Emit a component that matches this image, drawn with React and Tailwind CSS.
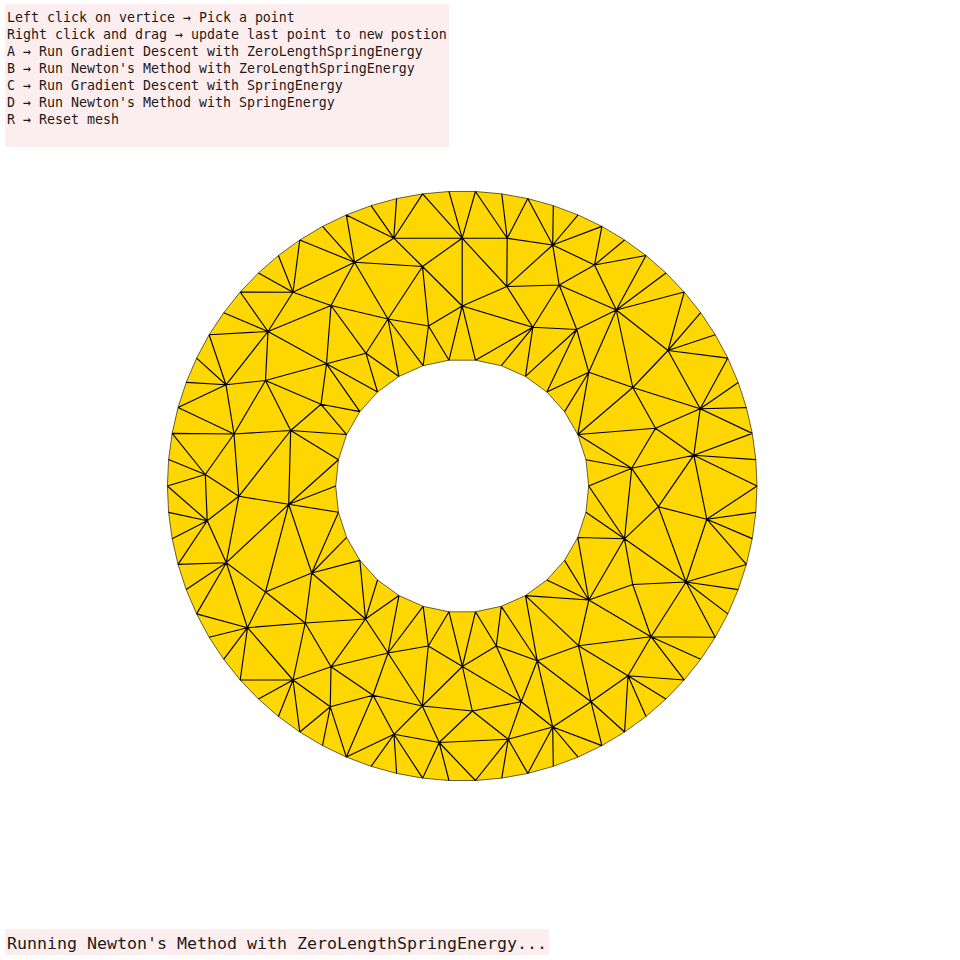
const CX = 462.2;
const CY = 486;

const ring = (prefix, count, radius) =>
  Array.from({ length: count }, (_, n) => {
    const t = (2 * Math.PI * n) / count;
    return [prefix + n, [CX + radius * Math.cos(t), CY - radius * Math.sin(t)]];
  });

const outer = ring("o", 70, 294.8);
const inner = ring("i", 30, 126.5);

const interior = {
  a: [293, 292.3], b: [268, 331.5], c: [331, 305.5], d: [326.5, 363.8], e: [354.5, 262.3],
  f: [393.8, 238.2], g: [462.2, 238.2], h: [422.5, 266.5], i: [388, 319], j: [428.5, 326],
  k: [462.2, 306], l: [507.2, 238.2], m: [506.8, 286.5], n: [532.8, 327.3], p: [366, 353.3],
  q: [552.7, 245], r: [594.5, 265], s: [559.2, 285], t: [616.3, 310], u: [576.7, 329.5],
  v: [668, 350.5], w: [588.8, 372.3],
  A: [226, 384.8], B: [265.5, 380.5], C: [321, 404.3], D: [234, 434], E: [290.7, 430.5],
  F: [205.3, 474.5], G: [238.8, 496.3], H: [207.2, 520.8], J: [288.7, 504.3],
  K: [632.8, 387.5], L: [700.2, 408.7], M: [655.5, 428.3], N: [693.8, 455.2], P: [631.7, 468.3],
  Q: [658.3, 506.7], R: [706.8, 519.2], S: [624.5, 538.8],
  T: [226.3, 562.7], U: [265.5, 592], V: [311.7, 573], W: [247.5, 627.7], X: [305.2, 623],
  Y: [293, 680], Z: [331, 666.8], aa: [330.3, 706.8], ab: [365.5, 619], ac: [388, 653],
  ad: [428.3, 646], ae: [462.4, 666.5], af: [496.3, 646], ag: [537.2, 660.7], ah: [373, 695.3],
  ai: [422.3, 706], aj: [472.3, 711], ak: [521.3, 701.7], al: [394, 734.3], am: [439.2, 742.5],
  an: [508.2, 739.3], ao: [588.8, 600], ap: [632.7, 584.5], aq: [686, 582], ar: [651, 636.7],
  as: [578.5, 645.7], at: [628, 675.8], au: [591, 701.7], av: [552.7, 727],
};

const vertices = { ...Object.fromEntries(outer), ...Object.fromEntries(inner), ...interior };

// Neighbours of every interior vertex; each edge is listed at one end at least.
const adjacency = {
  a: "o24 o25 o26 o27 b c e",
  b: "o27 o28 o29 c d B A",
  c: "e i p d",
  d: "B C p i11 i12",
  e: "o24 o23 o22 f h i",
  f: "o22 o21 o20 o19 g h",
  g: "o19 o18 o17 l m k h",
  h: "k j i",
  i: "p j i10 i9",
  j: "k i9 i8",
  k: "m n i8 i7",
  l: "o17 o16 o15 q m",
  m: "q s n",
  n: "s u i7 i6 i5",
  p: "i10 i11",
  q: "o15 o14 o13 o12 r s",
  r: "s t o12 o11 o10",
  s: "t u",
  t: "o10 o9 o8 v K w u",
  u: "w i5 i4",
  v: "o8 o7 o6 o5 L K",
  w: "K i2 i3 i4",
  A: "o29 o30 o31 o32 B D",
  B: "C D E",
  C: "E i12 i13",
  D: "E F G o32 o33",
  E: "G J i13 i14",
  F: "G H o33 o34 o35",
  G: "H J T",
  H: "T o35 o36 o37 o38",
  J: "i14 i15 i16 V U T",
  K: "L M i2",
  L: "o5 o4 o3 o2 N M",
  M: "N P i2",
  N: "P Q R o0 o1 o2",
  P: "i2 i1 i0 Q S",
  Q: "R S aq",
  R: "o0 o69 o68 o67 aq",
  S: "i0 i29 i28 ao ap aq",
  T: "o38 o39 o40 U W",
  U: "V W X",
  V: "i16 i17 i18 X ab",
  W: "X Y o40 o41 o42 o43",
  X: "Y Z ab",
  Y: "Z aa o43 o44 o45 o46",
  Z: "ab ac ah aa",
  aa: "ah o46 o47 o48",
  ab: "i18 i19 i20 ac",
  ac: "i20 i21 ad ah ai",
  ad: "ae ai i21 i22",
  ae: "i22 i23 af ai aj ak",
  af: "i23 i24 ag ak",
  ag: "i24 i25 ak as av au",
  ah: "ai al o48",
  ai: "al am aj",
  aj: "ak am an",
  ak: "an av",
  al: "am o48 o49 o50 o51",
  am: "an o51 o52 o53",
  an: "av o53 o54 o55",
  ao: "i28 i27 i26 i25 as ar ap",
  ap: "aq ar",
  aq: "o67 o66 o65 o64 ar",
  ar: "o64 o63 o62 at as",
  as: "i25 at au",
  at: "o62 o61 o60 o59 au",
  au: "av o59 o58",
  av: "o58 o57 o56 o55",
};

const edges = Object.entries(adjacency)
  .flatMap(([from, list]) =>
    list.split(" ").map((to) => `M${vertices[from].join(" ")}L${vertices[to].join(" ")}`)
  )
  .join("");

const loop = (points) => "M" + points.map(([, p]) => p.join(" ")).join("L") + "Z";
const outline = loop(outer) + loop(inner);

const help = [
  "Left click on vertice → Pick a point",
  "Right click and drag → update last point to new postion",
  "A → Run Gradient Descent with ZeroLengthSpringEnergy",
  "B → Run Newton's Method with ZeroLengthSpringEnergy",
  "C → Run Gradient Descent with SpringEnergy",
  "D → Run Newton's Method with SpringEnergy",
  "R → Reset mesh",
];

function Mesh() {
  return (
    <svg className="mt-[38px] ml-[161px] block h-[602px] w-[602px] shrink-0" viewBox="161 185 602 602">
      <path d={outline} fill="#ffd700" fillRule="evenodd" stroke="#000" strokeWidth="0.6" />
      <path d={edges} fill="none" stroke="#000" strokeWidth="1.15" />
    </svg>
  );
}

export default function App() {
  return (
    <main className="flex h-[960px] w-[960px] flex-col items-start overflow-hidden bg-white pt-1 font-['DejaVu_Sans_Mono',monospace] text-[#1c1a1a]">
      <section className="ml-[5px] h-[143px] w-[444px] shrink-0 bg-[#fceeee] pt-[5px] pl-[2px]">
        {help.map((line) => (
          <p
            key={line}
            className="h-[17px] origin-left scale-y-[1.07] text-[13.29px] leading-[17px] whitespace-pre"
          >
            {line}
          </p>
        ))}
      </section>
      <Mesh />
      <footer className="mt-[142px] ml-[5px] h-[26px] w-[544px] shrink-0 bg-[#fceeee] pt-[2px] pl-[2px]">
        <p className="text-[16.61px] leading-[25px] whitespace-pre">
          Running Newton's Method with ZeroLengthSpringEnergy...
        </p>
      </footer>
    </main>
  );
}
